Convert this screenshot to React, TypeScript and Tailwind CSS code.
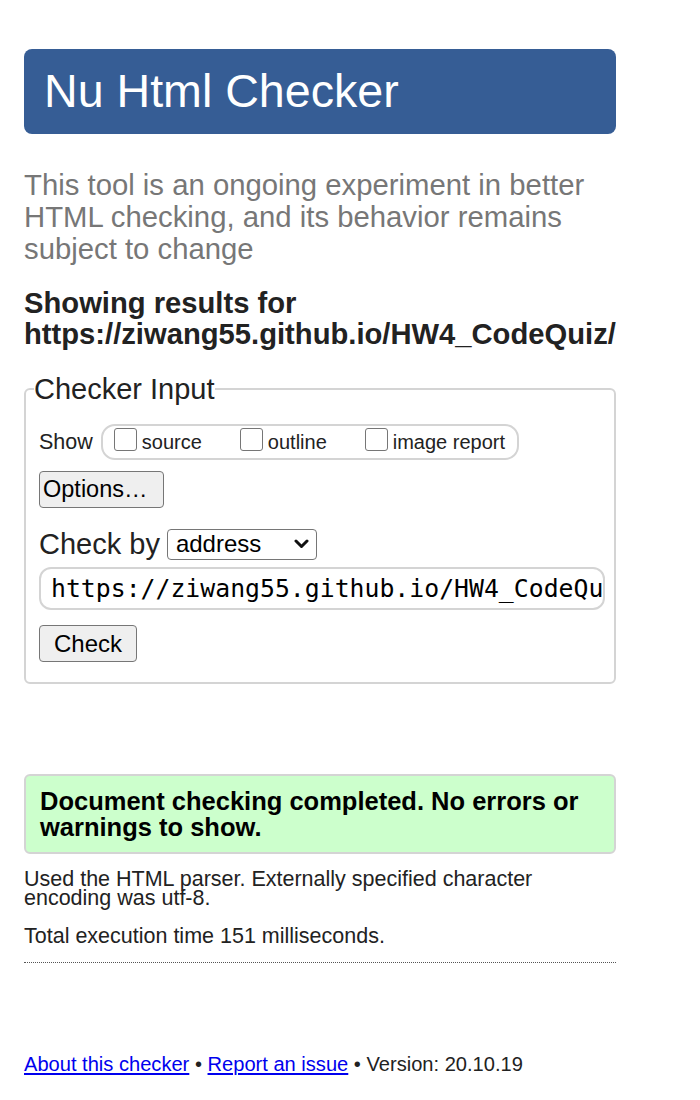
export default function App() {
  return (
    <div className="w-[700px] min-h-[1100px] bg-white font-['Liberation_Sans',Arial,sans-serif] text-[#222]">
      <div className="ml-[24px] w-[592px] pt-[49px] pb-[20px]">
        <header className="flex h-[85px] items-center rounded-[8px] bg-[#365d95] pl-[20px]">
          <h1 className="text-[46.6px] leading-none text-white">Nu Html Checker</h1>
        </header>

        <p className="mt-[35px] text-[29.3px] leading-[32px] text-[#777]">
          This tool is an ongoing experiment in better HTML checking, and its behavior remains subject to change
        </p>

        <h2 className="mt-[23px] text-[29.2px] font-bold leading-[31px] text-[#222]">
          Showing results for https://ziwang55.github.io/HW4_CodeQuiz/
        </h2>

        <fieldset className="mt-[22px] w-full min-w-0 rounded-[6px] border-2 border-[#d4d4d4] pl-[13px] pr-[9px] pt-[18px] pb-[20px]">
          <legend className="-ml-[5px] text-[29px] leading-[34px]">Checker Input</legend>

          <div className="flex items-center">
            <span className="text-[21.5px]">Show</span>
            <div className="ml-[8px] flex h-[36px] items-center gap-[38px] rounded-[14px] border-2 border-[#d4d4d4] pl-[11px] pr-[12px]">
              <label className="flex items-center">
                <span className="-mt-[5px] h-[23px] w-[23px] rounded-[3px] border border-[#767676] bg-white" />
                <span className="ml-[5px] text-[20px]">source</span>
              </label>
              <label className="flex items-center">
                <span className="-mt-[5px] h-[23px] w-[23px] rounded-[3px] border border-[#767676] bg-white" />
                <span className="ml-[5px] text-[20px]">outline</span>
              </label>
              <label className="flex items-center">
                <span className="-mt-[5px] h-[23px] w-[23px] rounded-[3px] border border-[#767676] bg-white" />
                <span className="ml-[5px] text-[20px]">image report</span>
              </label>
            </div>
          </div>

          <button className="mt-[11px] flex h-[37px] w-[125px] items-center rounded-[4px] border border-[#767676] bg-[#efefef] pl-[3px] text-[23.5px] text-black">
            Options…
          </button>

          <div className="mt-[19px] flex h-[34px] items-center">
            <span className="text-[29px] leading-[34px]">Check by</span>
            <div className="ml-[7px] flex h-[31px] w-[150px] items-center justify-between rounded-[4px] border border-[#767676] bg-white pl-[8px] pr-[7px]">
              <span className="text-[24px] leading-none text-black">address</span>
              <svg width="15" height="10" viewBox="0 0 15 10" fill="none">
                <path d="M2 2 L7.5 7.5 L13 2" stroke="#111" strokeWidth="3" strokeLinecap="round" strokeLinejoin="round" />
              </svg>
            </div>
          </div>

          <div className="mt-[6px] flex h-[43px] w-[566px] items-center overflow-hidden rounded-[12px] border-2 border-[#d4d4d4] pl-[10px] pr-[4px]">
            <span className="whitespace-nowrap font-['DejaVu_Sans_Mono',monospace] text-[24.8px] text-black">
              https://ziwang55.github.io/HW4_CodeQuiz/
            </span>
          </div>

          <button className="mt-[15px] flex h-[37px] w-[98px] items-center justify-center rounded-[4px] border border-[#767676] bg-[#efefef] text-[24px] text-black">
            Check
          </button>
        </fieldset>

        <div className="mt-[90px] rounded-[6px] border-2 border-[#d4d4d4] bg-[#ccffcc] px-[14px] py-[12px]">
          <p className="text-[25.5px] font-bold leading-[26px] text-black">
            Document checking completed. No errors or warnings to show.
          </p>
        </div>

        <p className="mt-[16px] text-[21.5px] leading-[19px]">
          Used the HTML parser. Externally specified character encoding was utf-8.
        </p>
        <p className="mt-[19px] text-[21.5px] leading-[19px]">Total execution time 151 milliseconds.</p>

        <div className="mt-[16px] border-t border-dotted border-[#555]" />

        <p className="mt-[89px] text-[20.1px] leading-[24px]">
          <a className="text-[#0000ee] underline">About this checker</a> •{" "}
          <a className="text-[#0000ee] underline">Report an issue</a> • Version: 20.10.19
        </p>
      </div>
    </div>
  );
}
